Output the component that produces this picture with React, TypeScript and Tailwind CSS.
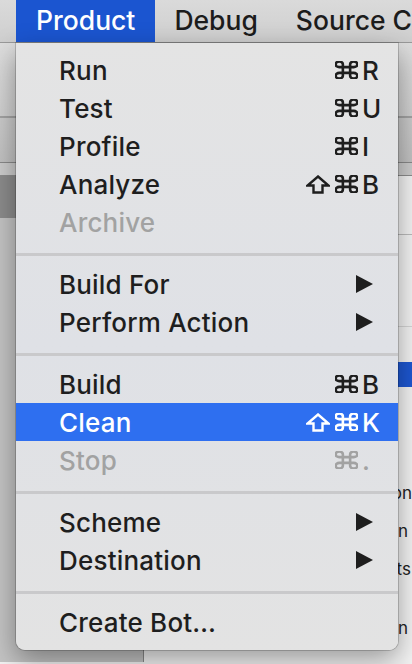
import React from 'react';

type Item =
  | { kind: 'sep' }
  | {
      kind: 'item';
      label: string;
      mods?: ('cmd' | 'shift')[];
      keyChar?: string;
      submenu?: boolean;
      disabled?: boolean;
      active?: boolean;
    };

const items: Item[] = [
  { kind: 'item', label: 'Run', mods: ['cmd'], keyChar: 'R' },
  { kind: 'item', label: 'Test', mods: ['cmd'], keyChar: 'U' },
  { kind: 'item', label: 'Profile', mods: ['cmd'], keyChar: 'I' },
  { kind: 'item', label: 'Analyze', mods: ['shift', 'cmd'], keyChar: 'B' },
  { kind: 'item', label: 'Archive', disabled: true },
  { kind: 'sep' },
  { kind: 'item', label: 'Build For', submenu: true },
  { kind: 'item', label: 'Perform Action', submenu: true },
  { kind: 'sep' },
  { kind: 'item', label: 'Build', mods: ['cmd'], keyChar: 'B' },
  { kind: 'item', label: 'Clean', mods: ['shift', 'cmd'], keyChar: 'K', active: true },
  { kind: 'item', label: 'Stop', mods: ['cmd'], keyChar: '.', disabled: true },
  { kind: 'sep' },
  { kind: 'item', label: 'Scheme', submenu: true },
  { kind: 'item', label: 'Destination', submenu: true },
  { kind: 'sep' },
  { kind: 'item', label: 'Create Bot…' },
];

const CmdGlyph = () => (
  <svg width={23} height={18} viewBox="2.5 2.5 19 19" preserveAspectRatio="none" className="shrink-0">
    <path
      d="M15 6v12a3 3 0 1 0 3-3H6a3 3 0 1 0 3 3V6a3 3 0 1 0-3 3h12a3 3 0 1 0-3-3"
      fill="none"
      stroke="currentColor"
      strokeWidth={2.6}
      vectorEffect="non-scaling-stroke"
    />
  </svg>
);

const ShiftGlyph = () => (
  <svg width={24} height={19} viewBox="0 0 24 19" className="shrink-0">
    <path
      d="M12 1.5 L22.5 10.5 H16.5 V17.5 H7.5 V10.5 H1.5 Z"
      fill="none"
      stroke="currentColor"
      strokeWidth={2.4}
      strokeLinejoin="miter"
    />
  </svg>
);

const SubArrow = () => (
  <svg width={17} height={18} viewBox="0 0 17 18" className="shrink-0">
    <polygon points="0,0 17,9 0,18" fill="currentColor" />
  </svg>
);

function MenuRow({ item }: { item: Extract<Item, { kind: 'item' }> }) {
  const color = item.active
    ? 'bg-[#2e6ff0] text-white'
    : item.disabled
      ? 'text-[#a2a2a2]'
      : 'text-[#1e1e1e]';
  return (
    <div className={`flex h-[38px] items-center pl-[43px] ${color}`}>
      <span className="flex-1 whitespace-nowrap tracking-[0.2px]">{item.label}</span>
      {item.submenu && (
        <span className="mr-[25px]">
          <SubArrow />
        </span>
      )}
      {item.keyChar && (
        <div className="flex items-center">
          <div className="flex items-center gap-[5px]">
            {item.mods?.map((m, i) => (m === 'cmd' ? <CmdGlyph key={i} /> : <ShiftGlyph key={i} />))}
          </div>
          <span className="ml-[4px] w-[36px]">{item.keyChar}</span>
        </div>
      )}
    </div>
  );
}

export default function App() {
  return (
    <div
      className="relative h-[664px] w-[412px] overflow-hidden bg-[#f3f3f3]"
      style={{ fontFamily: 'Inter, "Liberation Sans", sans-serif' }}
    >
      {/* menu bar */}
      <div className="flex h-[43px] items-stretch border-b border-[#9a9a9a] bg-gradient-to-b from-[#dadada] to-[#cfcfcf] pl-4 text-[26.5px] font-medium text-[#1c1c1c]">
        <div className="flex items-center bg-[#1b55d0] px-5 text-white">Product</div>
        <div className="flex items-center px-[19px]">Debug</div>
        <div className="flex items-center whitespace-nowrap px-[19px]">Source Control</div>
      </div>

      {/* toolbar */}
      <div className="h-[75px] border-b-2 border-[#a3a3a3] bg-gradient-to-b from-[#dedede] to-[#d0d0d0]" />
      {/* tab bar */}
      <div className="h-[45px] border-b border-[#8a8a8a] bg-gradient-to-b from-[#cbcbcb] to-[#c2c2c2]" />
      <div className="h-[13px] border-b border-[#8d8d8d] bg-[#cdcdcd]" />

      {/* content */}
      <div className="flex h-[486px]">
        <div className="flex w-[144px] flex-col border-r border-[#8a8a8a] bg-[#c4c4c4]">
          <div className="h-[42px] bg-[#8c8c8c]" />
        </div>
        <div className="flex flex-1 flex-col bg-[#f4f4f4] text-[17px] text-[#222]">
          <div className="h-[59px] border-b border-[#bcbcbc]" />
          <div className="h-[92px] border-b border-[#d6d6d6]" />
          <div className="h-[35px]" />
          <div className="h-[25px] bg-[#1d57d2]" />
          <div className="h-[88px]" />
          <div className="flex h-[38px] items-center justify-end whitespace-nowrap mr-[-9px]">Actions</div>
          <div className="flex h-[38px] items-center justify-end whitespace-nowrap mr-[4px]">Action</div>
          <div className="flex h-[38px] items-center justify-end whitespace-nowrap mr-[1px]">Tests</div>
          <div className="h-[21px]" />
          <div className="flex h-[38px] items-center justify-end whitespace-nowrap mr-[4px]">Run</div>
        </div>
      </div>

      {/* dropdown menu */}
      <div className="absolute left-4 top-[43px] w-[382px] rounded-b-[9px] bg-gradient-to-b from-[#e4e4e4] via-[#dfe1e6] to-[#e3e3e3] pb-[9px] pt-[8px] text-[26px] font-medium shadow-[0_10px_28px_rgba(0,0,0,0.38),0_0_0_1px_rgba(0,0,0,0.18)]">
        {items.map((it, i) =>
          it.kind === 'sep' ? (
            <div key={i} className="pb-[9px] pt-[12px]">
              <div className="h-[3px] bg-[#c9c9cb]" />
            </div>
          ) : (
            <MenuRow key={i} item={it} />
          ),
        )}
      </div>
    </div>
  );
}
